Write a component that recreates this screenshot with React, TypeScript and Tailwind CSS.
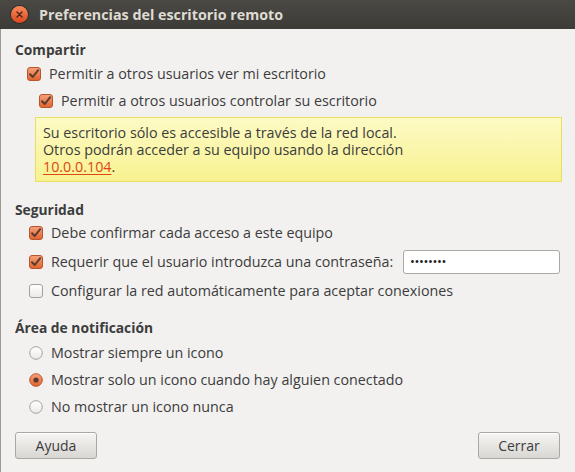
import React from "react"

const font = { fontFamily: '"Open Sans", "Noto Sans", sans-serif' }

function Check({ on }: { on: boolean }) {
  return (
    <svg width="14" height="14" viewBox="0 0 14 14" className="shrink-0">
      <defs>
        <linearGradient id="cbOn" x1="0" y1="0" x2="0" y2="1">
          <stop offset="0" stopColor="#f6a27a" />
          <stop offset="1" stopColor="#e0622f" />
        </linearGradient>
        <linearGradient id="cbOff" x1="0" y1="0" x2="0" y2="1">
          <stop offset="0" stopColor="#ffffff" />
          <stop offset="1" stopColor="#ebe9e6" />
        </linearGradient>
      </defs>
      <rect
        x="0.5"
        y="0.5"
        width="13"
        height="13"
        rx="2.5"
        fill={on ? "url(#cbOn)" : "url(#cbOff)"}
        stroke={on ? "#b9552c" : "#a3a19c"}
      />
      {on && (
        <path d="M3 7.2 L5.8 10 L11.2 3.2" fill="none" stroke="#5a3a2c" strokeWidth="2" strokeLinecap="round" strokeLinejoin="round" />
      )}
    </svg>
  )
}

function Radio({ on }: { on: boolean }) {
  return (
    <svg width="14" height="14" viewBox="0 0 14 14" className="shrink-0">
      <defs>
        <linearGradient id="rdOn" x1="0" y1="0" x2="0" y2="1">
          <stop offset="0" stopColor="#f6a27a" />
          <stop offset="1" stopColor="#e0622f" />
        </linearGradient>
        <linearGradient id="rdOff" x1="0" y1="0" x2="0" y2="1">
          <stop offset="0" stopColor="#ffffff" />
          <stop offset="1" stopColor="#ebe9e6" />
        </linearGradient>
      </defs>
      <circle cx="7" cy="7" r="6.3" fill={on ? "url(#rdOn)" : "url(#rdOff)"} stroke={on ? "#b9552c" : "#a3a19c"} />
      {on && <circle cx="7" cy="7" r="2.6" fill="#5a3a2c" />}
    </svg>
  )
}

function Row({ children, h = "h-[27px]", pl = "pl-[27px]" }: { children: React.ReactNode; h?: string; pl?: string }) {
  return <div className={`flex items-center gap-[8px] ${h} ${pl}`}>{children}</div>
}

function Button({ label }: { label: string }) {
  return (
    <button className="h-[27px] w-[82px] rounded-[3px] border border-[#aaa8a3] bg-gradient-to-b from-[#f6f5f3] to-[#d9d7d3] text-[14px] text-[#3c3c3c] shadow-[inset_0_1px_0_#ffffff]">
      {label}
    </button>
  )
}

export default function App() {
  return (
    <div className="h-[472px] w-[575px] overflow-hidden bg-[#f2f1f0] text-[14.3px] text-[#3c3c3c]" style={font}>
      {/* title bar */}
      <div className="flex h-[29px] items-center gap-[11px] bg-gradient-to-b from-[#4a4944] to-[#3c3b37] pl-[11px]">
        <div className="flex h-[17px] w-[17px] items-center justify-center rounded-full bg-gradient-to-b from-[#f98a5a] to-[#d9461a] shadow-[0_0_0_1px_#2e2d2a]">
          <svg width="7" height="7" viewBox="0 0 7 7">
            <path d="M1 1 L6 6 M6 1 L1 6" stroke="#4a241a" strokeWidth="1.4" strokeLinecap="round" />
          </svg>
        </div>
        <span className="text-[14.3px] font-bold text-[#dfdbd2]">Preferencias del escritorio remoto</span>
      </div>

      <div className="h-[443px] border-l border-[#9b9a96] pl-[14px] pr-[14px] pt-[12px]">
        {/* Compartir */}
        <div className="h-[18px] text-[13.8px] leading-[18px] font-bold">Compartir</div>
        <div className="mt-[1px]">
          <Row pl="pl-[12px]">
            <Check on />
            <span>Permitir a otros usuarios ver mi escritorio</span>
          </Row>
          <Row pl="pl-[24px]">
            <Check on />
            <span>Permitir a otros usuarios controlar su escritorio</span>
          </Row>
        </div>
        <div className="ml-[20px] mt-[3px] h-[65px] w-[527px] border border-[#e7df63] bg-gradient-to-b from-[#fdfac4] to-[#f8f290] px-[7px] pt-[6px] leading-[17px]">
          <div>Su escritorio sólo es accesible a través de la red local.</div>
          <div>Otros podrán acceder a su equipo usando la dirección</div>
          <div>
            <span className="text-[#dd4814] underline underline-offset-2">10.0.0.104</span>.
          </div>
        </div>

        {/* Seguridad */}
        <div className="mt-[19px] h-[18px] text-[13.8px] leading-[18px] font-bold">Seguridad</div>
        <Row h="h-[28px]" pl="pl-[14px]">
          <Check on />
          <span>Debe confirmar cada acceso a este equipo</span>
        </Row>
        <Row h="h-[30px]" pl="pl-[14px]">
          <Check on />
          <span>Requerir que el usuario introduzca una contraseña:</span>
          <div className="ml-auto mr-[1px] flex h-[24px] w-[157px] items-center rounded-[3px] border border-[#a9a8a4] bg-white pl-[6px] text-[13px] tracking-[-0.4px] text-[#222]">
            ••••••••
          </div>
        </Row>
        <Row pl="pl-[14px]">
          <Check on={false} />
          <span>Configurar la red automáticamente para aceptar conexiones</span>
        </Row>

        {/* Área de notificación */}
        <div className="mt-[15px] h-[18px] text-[13.8px] leading-[18px] font-bold">Área de notificación</div>
        <div className="mt-[2px]">
          <Row pl="pl-[14px]">
            <Radio on={false} />
            <span>Mostrar siempre un icono</span>
          </Row>
          <Row pl="pl-[14px]">
            <Radio on />
            <span>Mostrar solo un icono cuando hay alguien conectado</span>
          </Row>
          <Row pl="pl-[14px]">
            <Radio on={false} />
            <span>No mostrar un icono nunca</span>
          </Row>
        </div>

        <div className="mt-[12px] flex justify-between pr-[1px]">
          <Button label="Ayuda" />
          <Button label="Cerrar" />
        </div>
      </div>
    </div>
  )
}
